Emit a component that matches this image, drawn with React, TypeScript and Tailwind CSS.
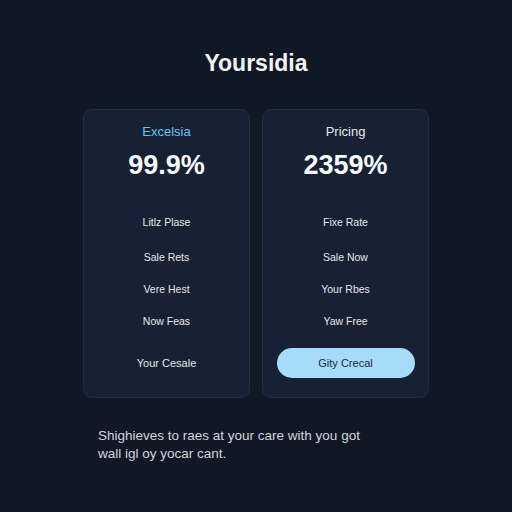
import React from "react";

const font = { fontFamily: "'Liberation Sans', Arial, sans-serif" };

function Card({ label, labelClass, price, features, cta, highlighted }: { label: string; labelClass: string; price: string; features: string[]; cta: string; highlighted?: boolean }) {
  const gaps = ["mt-[33px]", "mt-[19px]", "mt-[16px]", "mt-[16px]"];
  return (
    <div className="w-[167px] h-[289px] rounded-[9px] bg-[#162133] border border-[#222e42] flex flex-col items-center pt-[14px]">
      <div className={`text-[13px] leading-[16px] ${labelClass}`}>{label}</div>
      <div className="mt-[9px] text-[27px] leading-[32px] font-semibold text-[#f8fafc]">{price}</div>
      {features.map((f, i) => (
        <div key={i} className={`${gaps[i]} text-[10.5px] leading-[16px] text-[#e5e7eb]`}>{f}</div>
      ))}
      <div
        className={`mt-[19px] w-[138px] h-[30px] rounded-full flex items-center justify-center text-[11px] ${
          highlighted ? "bg-[#a6dcfa] text-[#1e293b]" : "text-[#e5e7eb]"
        }`}
      >
        {cta}
      </div>
    </div>
  );
}

export default function App() {
  return (
    <div className="w-[512px] h-[512px] bg-[#101826] flex flex-col items-center" style={font}>
      <div className="mt-[49px] text-[23px] leading-[28px] font-bold text-[#f3f4f6]">Yoursidia</div>
      <div className="mt-[32px] flex gap-[12px]">
        <Card
          label="Excelsia"
          labelClass="text-[#5ec8f2]"
          price="99.9%"
          features={["Litlz Plase", "Sale Rets", "Vere Hest", "Now Feas"]}
          cta="Your Cesale"
        />
        <Card
          label="Pricing"
          labelClass="text-[#e5e7eb]"
          price="2359%"
          features={["Fixe Rate", "Sale Now", "Your Rbes", "Yaw Free"]}
          cta="Gity Crecal"
          highlighted
        />
      </div>
      <div className="self-start ml-[98px] mt-[29px] w-[280px] text-[13.5px] leading-[18px] text-[#d1d5db]">
        Shighieves to raes at your care with you got wall igl oy yocar cant.
      </div>
    </div>
  );
}
